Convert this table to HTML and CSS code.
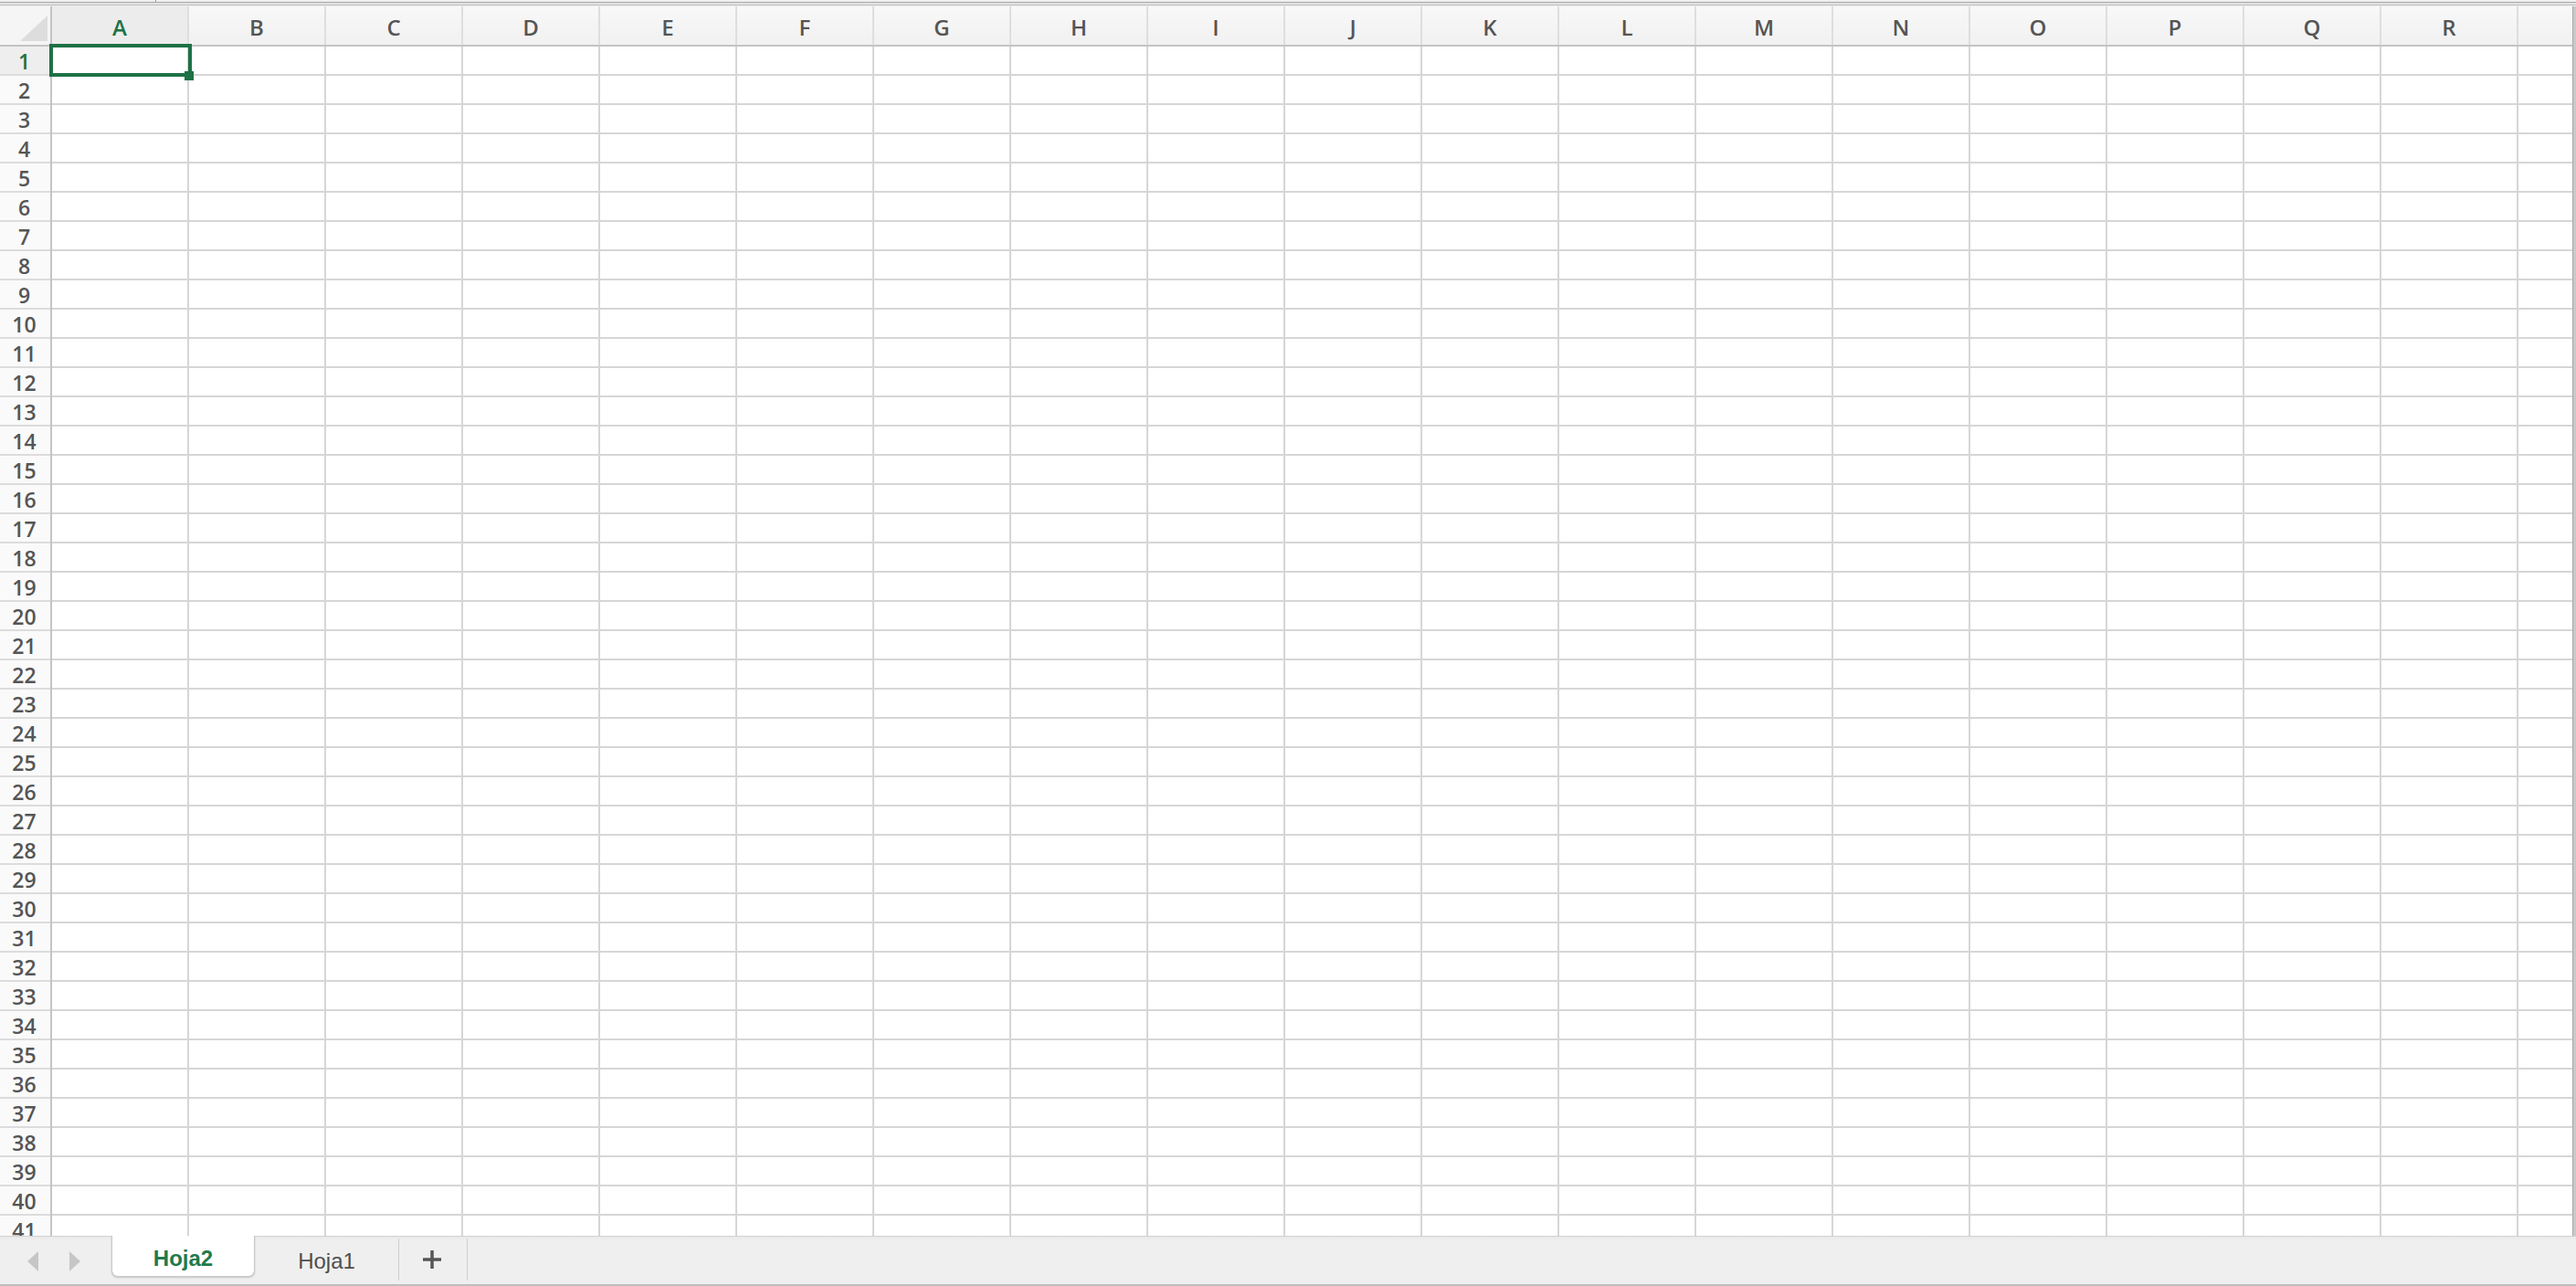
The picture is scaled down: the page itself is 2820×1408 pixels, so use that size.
FILE: index.html
```html
<!DOCTYPE html>
<html lang="es">
<head>
<meta charset="utf-8">
<title>Hoja2</title>
<link rel="stylesheet" href="styles.css">
</head>
<body>
<div class="sheet">
  <div class="topband"><span class="tick"></span></div>
  <div class="main">
    <div class="grid-area">
      <div class="corner"><span class="corner-tri"></span></div>
      <div class="colheads">
        <div class="ch active">A</div><div class="ch">B</div><div class="ch">C</div><div class="ch">D</div>
        <div class="ch">E</div><div class="ch">F</div><div class="ch">G</div><div class="ch">H</div>
        <div class="ch">I</div><div class="ch">J</div><div class="ch">K</div><div class="ch">L</div>
        <div class="ch">M</div><div class="ch">N</div><div class="ch">O</div><div class="ch">P</div>
        <div class="ch">Q</div><div class="ch">R</div><div class="ch last"></div>
      </div>
      <div class="rowheads">
        <div class="rh active">1</div><div class="rh">2</div><div class="rh">3</div><div class="rh">4</div>
        <div class="rh">5</div><div class="rh">6</div><div class="rh">7</div><div class="rh">8</div>
        <div class="rh">9</div><div class="rh">10</div><div class="rh">11</div><div class="rh">12</div>
        <div class="rh">13</div><div class="rh">14</div><div class="rh">15</div><div class="rh">16</div>
        <div class="rh">17</div><div class="rh">18</div><div class="rh">19</div><div class="rh">20</div>
        <div class="rh">21</div><div class="rh">22</div><div class="rh">23</div><div class="rh">24</div>
        <div class="rh">25</div><div class="rh">26</div><div class="rh">27</div><div class="rh">28</div>
        <div class="rh">29</div><div class="rh">30</div><div class="rh">31</div><div class="rh">32</div>
        <div class="rh">33</div><div class="rh">34</div><div class="rh">35</div><div class="rh">36</div>
        <div class="rh">37</div><div class="rh">38</div><div class="rh">39</div><div class="rh">40</div>
        <div class="rh">41</div>
      </div>
      <div class="cells"></div>
      <div class="selection"></div>
      <div class="fill-handle"></div>
    </div>
    <div class="vbar"></div>
  </div>
  <div class="tabbar">
    <div class="nav">
      <svg class="arrow" width="13" height="22" viewBox="0 0 13 22"><polygon points="12,0 12,22 0,11" fill="#c6c6c6"/></svg>
      <svg class="arrow" width="13" height="22" viewBox="0 0 13 22"><polygon points="1,0 1,22 13,11" fill="#c6c6c6"/></svg>
    </div>
    <div class="tab tab-active">Hoja2</div>
    <div class="tab">Hoja1</div>
    <div class="tab tab-add">
      <svg width="20" height="20" viewBox="0 0 20 20"><path d="M10 0V20M0 10H20" stroke="#555" stroke-width="3.5"/></svg>
    </div>
  </div>
</div>
</body>
</html>
```

FILE: styles.css
```css
* { box-sizing: border-box; }
html, body { margin: 0; padding: 0; }
body {
  width: 2820px;
  height: 1408px;
  overflow: hidden;
  background: #ffffff;
  font-family: "Open Sans", "Liberation Sans", sans-serif;
}
.sheet {
  display: flex;
  flex-direction: column;
  width: 2820px;
  height: 1408px;
}
.topband {
  position: relative;
  height: 7px;
  flex: none;
  background: linear-gradient(to bottom, #f0f0f0 0, #f0f0f0 2px, #a9a9a9 2px, #a9a9a9 3px, #e2e2e2 3px, #e2e2e2 5px, #c2c2c2 5px, #c2c2c2 6px, #ececec 6px);
}
.tick {
  position: absolute;
  left: 170px;
  top: 0;
  width: 1px;
  height: 2px;
  background: #9a9a9a;
}
.main {
  flex: 1;
  display: flex;
  min-height: 0;
  overflow: hidden;
}
.grid-area {
  position: relative;
  flex: 1;
  display: grid;
  grid-template-columns: 57px 1fr;
  grid-template-rows: 44px 1fr;
  overflow: hidden;
}
.corner {
  position: relative;
  background: #f5f5f5;
  border-right: 2px solid #c4c4c4;
  border-bottom: 2px solid #c4c4c4;
}
.corner-tri {
  position: absolute;
  right: 3px;
  bottom: 4px;
  width: 0;
  height: 0;
  border-left: 30px solid transparent;
  border-bottom: 28px solid #dddddd;
}
.colheads {
  display: flex;
  background: linear-gradient(to bottom, #f8f8f8, #f1f1f1);
  border-bottom: 2px solid #c4c4c4;
}
.ch {
  flex: none;
  width: 150px;
  border-right: 2px solid #dedede;
  display: flex;
  align-items: center;
  justify-content: center;
  font-size: 24px;
  font-weight: 600;
  color: #555555;
  padding-top: 2px;
}
.ch.active {
  background: #ececec;
  color: #1e7145;
}
.ch.last { border-right: none; width: 60px; }
.rowheads {
  display: flex;
  flex-direction: column;
  background: #fafafa;
  border-right: 2px solid #c4c4c4;
}
.rh {
  flex: none;
  height: 32px;
  border-bottom: 2px solid #dcdcdc;
  display: flex;
  align-items: center;
  justify-content: center;
  font-size: 23px;
  font-weight: 600;
  color: #555555;
  padding-right: 2px;
  padding-top: 2px;
}
.rh.active {
  background: #eeeeee;
  color: #1e7145;
}
.cells {
  background-color: #ffffff;
  background-image:
    linear-gradient(to right, transparent 148px, #d6d6d6 148px),
    linear-gradient(to bottom, transparent 30px, #d6d6d6 30px);
  background-size: 150px 100%, 100% 32px;
  background-repeat: repeat-x, repeat-y;
}
.selection {
  position: absolute;
  left: 54px;
  top: 41px;
  width: 156px;
  height: 36px;
  border: 4px solid #1e7145;
}
.fill-handle {
  position: absolute;
  left: 202px;
  top: 71px;
  width: 10px;
  height: 10px;
  background: #1e7145;
}
.vbar {
  flex: none;
  width: 4px;
  background: #c9c9c9;
  border-left: 1px solid #a8a8a8;
}
.tabbar {
  flex: none;
  height: 55px;
  display: flex;
  align-items: flex-start;
  background: linear-gradient(to bottom, #e9e9e9 0, #efefef 4px, #efefef);
  border-top: 1px solid #d2d2d2;
  border-bottom: 2px solid #bdbdbd;
  font-family: "Liberation Sans", Arial, sans-serif;
}
.nav {
  width: 122px;
  height: 52px;
  display: flex;
  align-items: center;
  gap: 32px;
  padding-left: 30px;
  padding-top: 2px;
}
.tab {
  width: 158px;
  height: 46px;
  margin-top: 2px;
  display: flex;
  align-items: center;
  justify-content: center;
  font-size: 24px;
  color: #4e4e4e;
  border-right: 1px solid #cfcfcf;
  padding-top: 3px;
}
.tab-active {
  width: 157px;
  margin-top: -1px;
  height: 45px;
  background: #ffffff;
  color: #227a4b;
  font-weight: bold;
  border: 1px solid #c8c8c8;
  border-top: none;
  border-radius: 0 0 7px 7px;
  box-shadow: 0 1px 2px rgba(0,0,0,0.18);
  padding-top: 5px;
}
.tab-add {
  width: 75px;
  padding-top: 0;
  padding-right: 2px;
}
```
